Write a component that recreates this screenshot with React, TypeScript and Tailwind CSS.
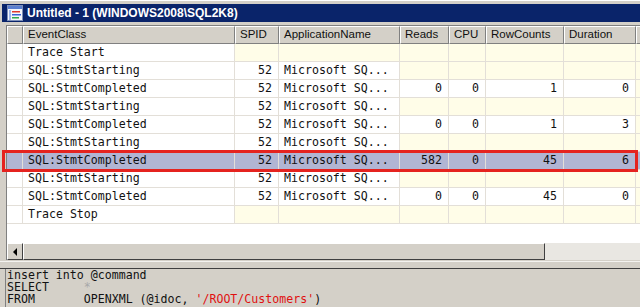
import React from 'react';

type Row = {
  event: string;
  spid?: string;
  app?: string;
  reads?: string;
  cpu?: string;
  rows?: string;
  duration?: string;
  selected?: boolean;
};

const rows: Row[] = [
  { event: 'Trace Start' },
  { event: 'SQL:StmtStarting', spid: '52', app: 'Microsoft SQ...' },
  { event: 'SQL:StmtCompleted', spid: '52', app: 'Microsoft SQ...', reads: '0', cpu: '0', rows: '1', duration: '0' },
  { event: 'SQL:StmtStarting', spid: '52', app: 'Microsoft SQ...' },
  { event: 'SQL:StmtCompleted', spid: '52', app: 'Microsoft SQ...', reads: '0', cpu: '0', rows: '1', duration: '3' },
  { event: 'SQL:StmtStarting', spid: '52', app: 'Microsoft SQ...' },
  { event: 'SQL:StmtCompleted', spid: '52', app: 'Microsoft SQ...', reads: '582', cpu: '0', rows: '45', duration: '6', selected: true },
  { event: 'SQL:StmtStarting', spid: '52', app: 'Microsoft SQ...' },
  { event: 'SQL:StmtCompleted', spid: '52', app: 'Microsoft SQ...', reads: '0', cpu: '0', rows: '45', duration: '0' },
  { event: 'Trace Stop' },
];

const headers = ['', 'EventClass', 'SPID', 'ApplicationName', 'Reads', 'CPU', 'RowCounts', 'Duration', ''];

const mono = { fontFamily: '"DejaVu Sans Mono", "Liberation Mono", monospace' };

function Cell({ value, right, selected, first }: { value?: string; right?: boolean; selected?: boolean; first?: boolean }) {
  const bg = selected ? 'bg-[#b1b5d3]' : value !== undefined || first ? 'bg-white' : 'bg-[#fffde8]';
  return (
    <div
      className={`h-[18px] border-r border-b border-[#e3dfd8] ${bg} flex items-center overflow-hidden whitespace-pre text-[11.6px] text-[#111] ${
        right ? 'justify-end pr-[6px]' : 'pl-[5px]'
      }`}
      style={mono}
    >
      {value}
    </div>
  );
}

function TraceIcon() {
  return (
    <svg width="16" height="16" viewBox="0 0 16 16" className="shrink-0">
      <rect x="0.5" y="0.5" width="15" height="15" fill="#f4f6fb" stroke="#7d8fb8" />
      <rect x="1" y="1" width="14" height="3" fill="#5b7fd0" />
      <rect x="2" y="5" width="2" height="10" fill="#9fb6e8" />
      <rect x="5" y="6" width="8" height="1.5" fill="#e03a2e" />
      <rect x="5" y="9" width="9" height="1.5" fill="#3a62d6" />
      <rect x="5" y="12" width="7" height="1.5" fill="#2fa84a" />
    </svg>
  );
}

export default function App() {
  return (
    <div className="relative w-[640px] h-[307px] overflow-hidden bg-[#d4d0c8] flex flex-col">
      {/* Title bar */}
      <div className="h-[4px] border-t border-white" />
      <div
        className="ml-[2px] h-[18px] bg-[#0a246a] flex items-center gap-[4px] pl-[5px] text-white font-bold text-[12px]"
        style={{ fontFamily: '"Liberation Sans", Arial, sans-serif' }}
      >
        <TraceIcon />
        <span>Untitled - 1 (WINDOWS2008\SQL2K8)</span>
      </div>
      <div className="h-[3px]" />

      {/* Grid */}
      <div className="ml-[6px] h-[218px] border-l border-t border-[#808080] bg-white overflow-hidden">
        <div className="grid grid-cols-[16px_212px_44px_121px_49px_37px_78px_72px_40px] w-[669px]">
          {headers.map((h, i) => (
            <div
              key={i}
              className="h-[18px] bg-[#d4d0c8] border-t border-l border-t-white border-l-white border-r border-b border-r-[#808080] border-b-[#808080] flex items-center pl-[4px] text-[11.5px] text-[#101010] whitespace-nowrap overflow-hidden"
              style={{ fontFamily: '"Liberation Sans", Arial, sans-serif' }}
            >
              {h}
            </div>
          ))}
          {rows.map((r, i) => (
            <React.Fragment key={i}>
              <Cell first selected={r.selected} />
              <Cell value={r.event} selected={r.selected} first />
              <Cell value={r.spid} right selected={r.selected} />
              <Cell value={r.app} selected={r.selected} />
              <Cell value={r.reads} right selected={r.selected} />
              <Cell value={r.cpu} right selected={r.selected} />
              <Cell value={r.rows} right selected={r.selected} />
              <Cell value={r.duration} right selected={r.selected} />
              <Cell selected={r.selected} />
            </React.Fragment>
          ))}
        </div>
      </div>

      {/* Horizontal scrollbar */}
      <div className="ml-[6px] h-[17px] border-l border-[#808080] flex">
        <div className="w-[16px] h-[17px] bg-[#d4d0c8] border-t border-l border-white border-r border-b border-r-[#404040] border-b-[#404040] flex items-center justify-center">
          <div className="w-0 h-0 border-y-[4px] border-y-transparent border-r-[4px] border-r-black" />
        </div>
        <div className="w-[522px] h-[17px] bg-[#d4d0c8] border-t border-l border-white border-r border-b border-r-[#404040] border-b-[#404040]" />
        <div className="flex-1 h-[17px] bg-[#e9e7e2]" />
      </div>

      {/* Splitter */}
      <div className="h-[8px] border-t border-[#f4f3f0] mt-[1px] border-b-[1px] border-b-[#404040]" />

      {/* Command text pane */}
      <div className="flex-1 ml-[5px] border-l border-[#808080] pl-[1px] text-[11.6px] leading-[12px] text-[#111]" style={mono}>
        <div className="h-[12px] whitespace-pre">insert into @command</div>
        <div className="h-[12px] whitespace-pre">
          SELECT     <span className="text-[#a8a8a8]">*</span>
        </div>
        <div className="h-[12px] whitespace-pre">
          FROM       OPENXML (@idoc, <span className="text-[#e01010]">'/ROOT/Customers'</span>)
        </div>
      </div>

      {/* Red highlight annotation */}
      <div className="absolute left-[2px] top-[150px] w-[636px] h-[22px] border-[3px] border-[#e5231f]" />
    </div>
  );
}
